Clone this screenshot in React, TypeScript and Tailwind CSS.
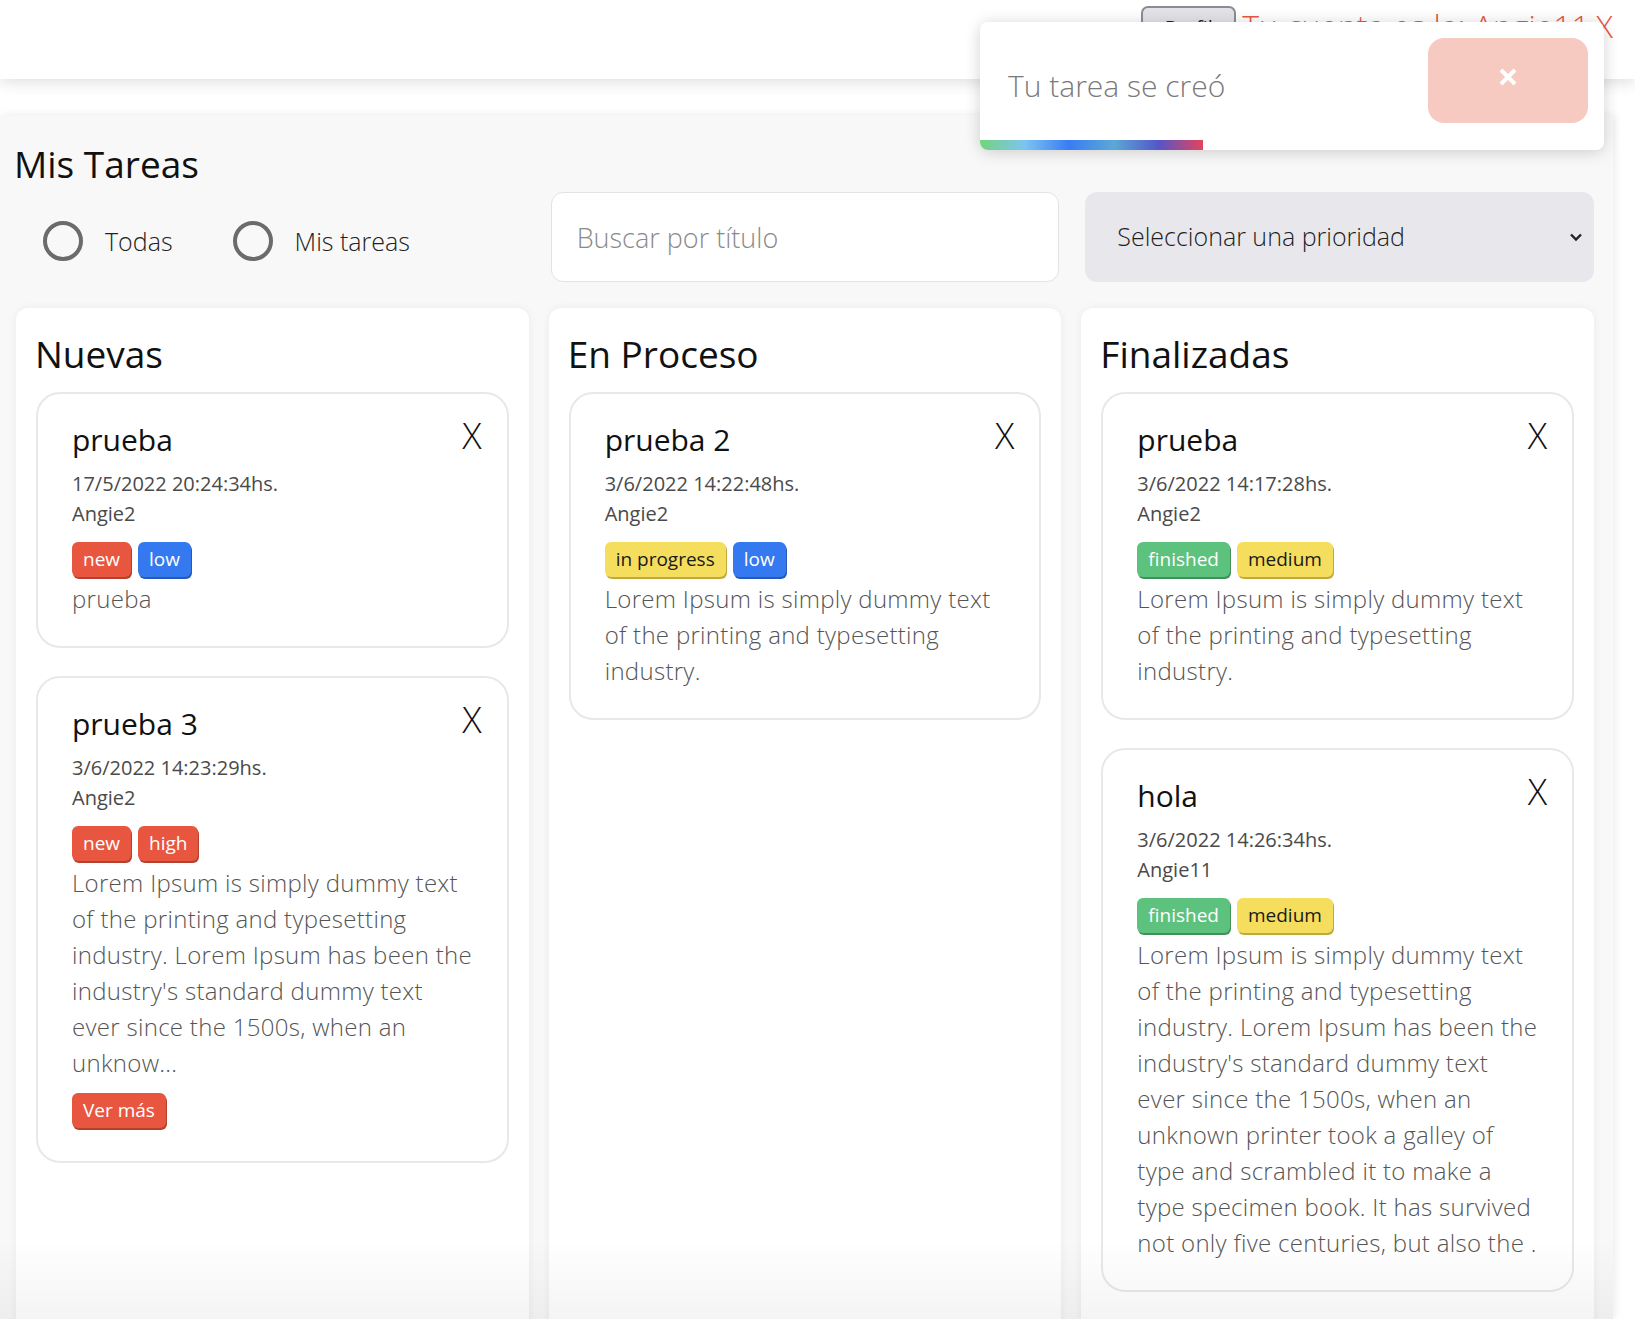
import React from "react";

type Kind = "red" | "blue" | "yellow" | "green";
type BadgeT = { label: string; kind: Kind };

const badgeCls: Record<Kind, string> = {
  red: "bg-[#e8563f] text-white shadow-[1px_2px_0_#b3412f]",
  blue: "bg-[#3479ef] text-white shadow-[1px_2px_0_#2659b8]",
  yellow: "bg-[#f5dd5e] text-[#1a1a1a] shadow-[1px_2px_0_#c2a93e]",
  green: "bg-[#5dc27d] text-white shadow-[1px_2px_0_#3f9159]",
};

function Badge({ label, kind }: BadgeT) {
  return (
    <span
      className={`inline-flex h-[35px] items-center rounded-[6px] px-[11px] text-[19px] leading-none ${badgeCls[kind]}`}
    >
      {label}
    </span>
  );
}

type Task = {
  title: string;
  date: string;
  author: string;
  badges: BadgeT[];
  lines: string[];
  more?: boolean;
};

function TaskCard({ title, date, author, badges, lines, more }: Task) {
  return (
    <div
      className={`rounded-[24px] border-2 border-[#e8e8e8] bg-white pl-[34px] pr-[35px] pt-[27px] ${
        more ? "pb-[33px]" : "pb-[29px]"
      }`}
    >
      <div className="flex items-start justify-between">
        <h3 className="text-[30px] leading-[38px] text-[#111]">{title}</h3>
        <span className="-mr-[10px] -mt-[3px] text-[36px] font-light leading-[36px] text-[#111]">
          X
        </span>
      </div>
      <p className="mt-[13px] text-[20px] leading-[24px] text-[#4a4a4a]">{date}</p>
      <p className="mt-[6px] text-[20px] leading-[24px] text-[#4a4a4a]">{author}</p>
      <div className="mt-[16px] flex gap-[7px]">
        {badges.map((b) => (
          <Badge key={b.label} {...b} />
        ))}
      </div>
      <div className="mt-[4px] text-[24px] font-light leading-[36px] tracking-[0.3px] text-[#555]">
        {lines.map((l, i) => (
          <div key={i} className="whitespace-nowrap">
            {l}
          </div>
        ))}
      </div>
      {more && (
        <button className="mt-[12px] inline-flex h-[35px] items-center rounded-[6px] bg-[#e8563f] px-[11px] text-[19px] leading-none text-white shadow-[1px_2px_0_#b3412f]">
          Ver más
        </button>
      )}
    </div>
  );
}

function Column({ title, tasks }: { title: string; tasks: Task[] }) {
  return (
    <section className="h-[1030px] rounded-t-[12px] bg-white px-[20px] pt-[24px] shadow-[0_0_8px_rgba(0,0,0,0.06)]">
      <h2 className="-ml-[1px] text-[37px] leading-[44px] text-[#111]">{title}</h2>
      <div className="mt-[16px] flex flex-col gap-[28px]">
        {tasks.map((t, i) => (
          <TaskCard key={i} {...t} />
        ))}
      </div>
    </section>
  );
}

const longLines = [
  "Lorem Ipsum is simply dummy text",
  "of the printing and typesetting",
  "industry. Lorem Ipsum has been the",
  "industry's standard dummy text",
  "ever since the 1500s, when an",
];

const shortLines = [
  "Lorem Ipsum is simply dummy text",
  "of the printing and typesetting",
  "industry.",
];

const nuevas: Task[] = [
  {
    title: "prueba",
    date: "17/5/2022 20:24:34hs.",
    author: "Angie2",
    badges: [
      { label: "new", kind: "red" },
      { label: "low", kind: "blue" },
    ],
    lines: ["prueba"],
  },
  {
    title: "prueba 3",
    date: "3/6/2022 14:23:29hs.",
    author: "Angie2",
    badges: [
      { label: "new", kind: "red" },
      { label: "high", kind: "red" },
    ],
    lines: [...longLines, "unknow..."],
    more: true,
  },
];

const proceso: Task[] = [
  {
    title: "prueba 2",
    date: "3/6/2022 14:22:48hs.",
    author: "Angie2",
    badges: [
      { label: "in progress", kind: "yellow" },
      { label: "low", kind: "blue" },
    ],
    lines: shortLines,
  },
];

const finalizadas: Task[] = [
  {
    title: "prueba",
    date: "3/6/2022 14:17:28hs.",
    author: "Angie2",
    badges: [
      { label: "finished", kind: "green" },
      { label: "medium", kind: "yellow" },
    ],
    lines: shortLines,
  },
  {
    title: "hola",
    date: "3/6/2022 14:26:34hs.",
    author: "Angie11",
    badges: [
      { label: "finished", kind: "green" },
      { label: "medium", kind: "yellow" },
    ],
    lines: [
      ...longLines,
      "unknown printer took a galley of",
      "type and scrambled it to make a",
      "type specimen book. It has survived",
      "not only five centuries, but also the .",
    ],
  },
];

function Radio({ label }: { label: string }) {
  return (
    <label className="flex items-center gap-[22px]">
      <span className="h-[40px] w-[40px] rounded-full border-[4px] border-[#6b6b6b]" />
      <span className="text-[25px] font-light leading-[32px] text-[#222]">{label}</span>
    </label>
  );
}

export default function App() {
  return (
    <div className="relative h-[1319px] w-[1635px] overflow-hidden bg-white font-['Open_Sans',sans-serif]">
      <header className="relative z-10 flex h-[79px] items-start justify-end bg-white pr-[22px] shadow-[0_4px_14px_rgba(0,0,0,0.12)]">
        <button className="mt-[6px] h-[44px] w-[95px] rounded-[7px] border-2 border-[#8b8b96] bg-[#e3e3e7] text-[20px] text-[#222]">
          Perfil
        </button>
        <span className="ml-[6px] mt-[10px] whitespace-nowrap text-[32px] font-light leading-[32px] text-[#e8563f]">
          Tu cuenta es la: Angie11
        </span>
        <span className="ml-[6px] mt-[10px] text-[32px] font-light leading-[32px] text-[#e8563f]">X</span>
      </header>

      <main className="mt-[36px] h-[1204px] w-[1613px] bg-[#f8f8f8] pl-[16px] pr-[19px] pt-[27px] shadow-[2px_0_8px_rgba(0,0,0,0.08)]">
        <h1 className="-ml-[2px] text-[37px] leading-[44px] text-[#111]">Mis Tareas</h1>

        <div className="mt-[6px] grid grid-cols-3 gap-[20px]">
          <div className="flex h-[90px] items-center gap-[60px] pl-[27px] pt-[8px]">
            <Radio label="Todas" />
            <Radio label="Mis tareas" />
          </div>
          <input
            className="mx-[2px] h-[90px] rounded-[12px] border border-[#e3e3e3] bg-white pl-[25px] text-[27px] font-light text-[#333] outline-none placeholder:text-[#8a8a8a]"
            placeholder="Buscar por título"
          />
          <div className="ml-[4px] flex h-[90px] items-center justify-between rounded-[12px] bg-[#e8e8ec] pl-[32px] pr-[11px]">
            <span className="text-[25px] font-light text-[#1e1e1e]">Seleccionar una prioridad</span>
            <svg width="14" height="10" viewBox="0 0 14 10" fill="none">
              <polyline points="2,2.5 7,7.5 12,2.5" stroke="#222" strokeWidth="2.4" />
            </svg>
          </div>
        </div>

        <div className="mt-[26px] grid grid-cols-3 items-start gap-[20px]">
          <Column title="Nuevas" tasks={nuevas} />
          <Column title="En Proceso" tasks={proceso} />
          <Column title="Finalizadas" tasks={finalizadas} />
        </div>
      </main>

      <div className="pointer-events-none absolute bottom-0 left-0 h-[80px] w-[1613px] bg-linear-to-b from-transparent to-[rgba(0,0,0,0.045)]" />

      <div className="absolute left-[980px] top-[22px] z-20 h-[128px] w-[624px] overflow-hidden rounded-[8px] bg-white shadow-[0_2px_16px_rgba(0,0,0,0.18)]">
        <div className="flex p-[16px]">
          <div className="flex-1 pl-[12px] pt-[30px] text-[30px] font-light leading-[36px] text-[#7a7a7a]">
            Tu tarea se creó
          </div>
          <button className="flex h-[85px] w-[160px] items-start justify-center rounded-[16px] bg-[#f6cac1] pt-[29px]">
            <svg width="20" height="20" viewBox="0 0 20 20">
              <path d="M3 3 L17 17 M17 3 L3 17" stroke="white" strokeWidth="4" />
            </svg>
          </button>
        </div>
        <div className="absolute bottom-0 left-0 h-[10px] w-[223px] bg-[linear-gradient(to_right,#74d47a,#7cc4f2,#3a7cf3,#5ba8d6,#5556c8,#e4435c)]" />
      </div>
    </div>
  );
}
